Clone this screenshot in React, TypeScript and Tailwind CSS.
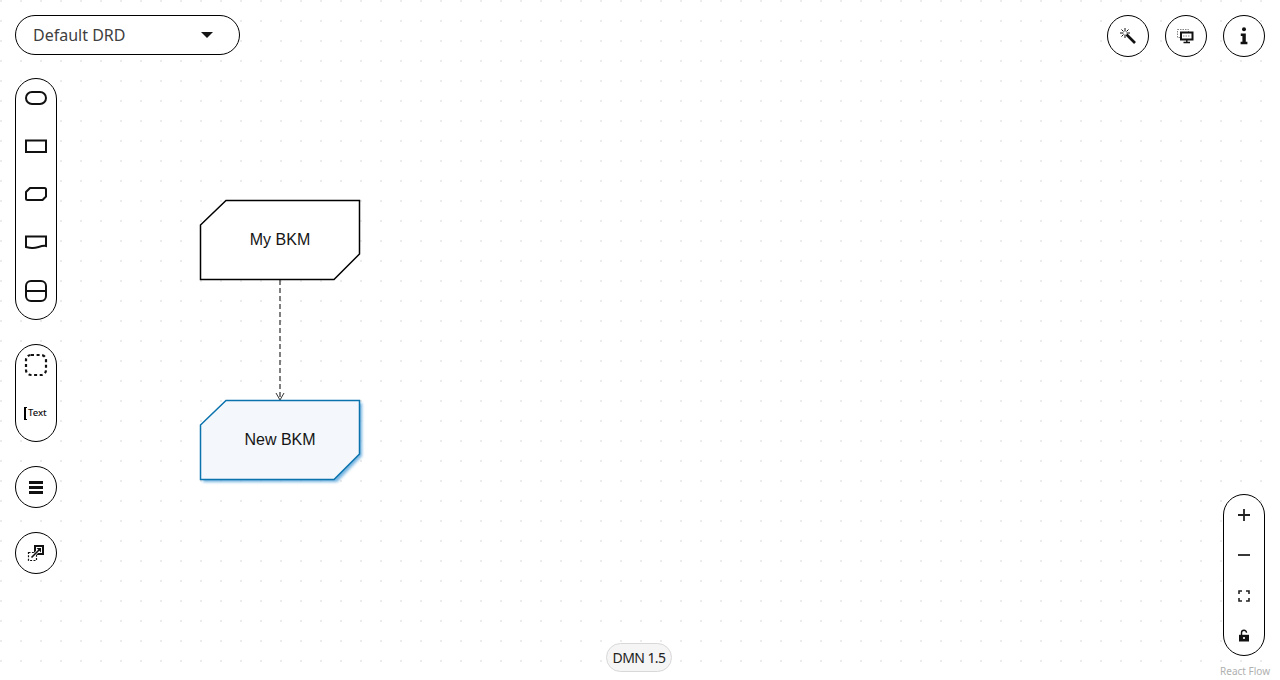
import { useState } from "react";

const iconBtn =
  "w-[42px] h-[42px] rounded-full border border-black bg-white flex items-center justify-center";

const BkmNode = ({ label, selected, className }: { label: string; selected?: boolean; className: string }) => (
  <div className={`absolute w-[160px] h-[80px] flex items-center justify-center ${className}`}>
    <svg width="166" height="86" viewBox="0 0 166 86" className="absolute left-0 top-0 overflow-visible">
      {selected && (
        <path
          d="M3 27 L28 3 L162 3 L162 56 L137 82 L3 82 Z"
          fill="#74b3e0"
          className="blur-[1.5px]"
        />
      )}
      <path
        d="M0.5 25 L26 0.5 L159.5 0.5 L159.5 54 L134 79.5 L0.5 79.5 Z"
        fill={selected ? "#f4f8fc" : "#ffffff"}
        stroke={selected ? "#0a72ad" : "#000000"}
        strokeWidth="1.5"
      />
    </svg>
    <span className="relative font-['Liberation_Sans',sans-serif] text-base text-[#151515]">{label}</span>
  </div>
);

const Palette = () => (
  <div className="w-[42px] h-[242px] rounded-full border border-black bg-white flex flex-col items-center gap-[28px] pt-[9px]">
    <svg width="24" height="20" viewBox="0 0 24 20" fill="none" stroke="#111" strokeWidth="2">
      <rect x="2" y="4" width="20" height="12" rx="6" />
    </svg>
    <svg width="24" height="20" viewBox="0 0 24 20" fill="none" stroke="#111" strokeWidth="2">
      <rect x="2" y="4.5" width="20" height="11.5" />
    </svg>
    <svg width="24" height="20" viewBox="0 0 24 20" fill="none" stroke="#111" strokeWidth="2">
      <path d="M6 4 H20.5 Q22 4 22 5.5 V12.5 L18.5 16 H3.5 Q2 16 2 14.5 V8 Z" strokeLinejoin="round" />
    </svg>
    <svg width="24" height="20" viewBox="0 0 24 20" fill="none" stroke="#111" strokeWidth="2">
      <path d="M2 4.5 H22 V14 C17 13 13 16.5 8 16 C6 16 4 15.5 2 15 Z" />
    </svg>
    <svg width="24" height="22" viewBox="0 0 24 22" fill="none" stroke="#111" strokeWidth="2">
      <rect x="2" y="1" width="20" height="20" rx="5" />
      <path d="M2 11 H22" />
    </svg>
  </div>
);

const Annotations = () => (
  <div className="w-[42px] h-[98px] rounded-full border border-black bg-white flex flex-col items-center pt-[8px] gap-[28px]">
    <svg width="24" height="24" viewBox="0 0 24 24" fill="none" stroke="#111" strokeWidth="2.2" strokeDasharray="3 2.6">
      <rect x="2" y="2" width="20" height="20" rx="5" />
    </svg>
    <div className="w-[24px] h-[16px] flex items-center gap-[1px]">
      <span className="w-[3px] h-[13px] border-l-2 border-y border-black" />
      <span className="font-['Noto_Sans',sans-serif] font-medium text-[9.5px] leading-none text-[#111]">Text</span>
    </div>
  </div>
);

export default function App() {
  const [diagram] = useState("Default DRD");
  return (
    <div className="relative w-[1280px] h-[680px] overflow-hidden bg-white bg-[radial-gradient(circle_at_1px_1px,#ececec_1px,transparent_1.5px)] bg-[size:20px_20px] font-['Noto_Sans',sans-serif]">
      {/* canvas */}
      <svg width="20" height="122" viewBox="0 0 20 122" fill="none" className="absolute left-[270px] top-[279px]">
        <path d="M10 1 V120" stroke="#555" strokeWidth="1.5" strokeDasharray="5 3" />
        <path d="M6 114 L10 121 L14 114" stroke="#333" strokeWidth="1" />
      </svg>
      <BkmNode label="My BKM" className="left-[200px] top-[200px]" />
      <BkmNode label="New BKM" selected className="left-[200px] top-[400px]" />

      {/* panels */}
      <div className="absolute inset-0 flex justify-between pl-[15px] pr-[15px] pt-[15px] pointer-events-none">
        <div className="flex flex-col items-start">
          <div className="w-[225px] h-[40px] rounded-full border border-black bg-white flex items-center justify-between pl-[17px] pr-[26px] text-base text-[#404040]">
            <span>{diagram}</span>
            <span className="w-0 h-0 border-x-[6px] border-x-transparent border-t-[6px] border-t-[#151515]" />
          </div>
          <div className="mt-[23px] flex flex-col gap-[24px]">
            <Palette />
            <Annotations />
            <div className={iconBtn}>
              <div className="flex flex-col gap-[2px]">
                <span className="block w-[14px] h-[3px] bg-[#111]" />
                <span className="block w-[14px] h-[3px] bg-[#111]" />
                <span className="block w-[14px] h-[3px] bg-[#111]" />
              </div>
            </div>
            <div className={iconBtn}>
              <svg width="18" height="18" viewBox="0 0 18 18" fill="none">
                <rect x="1.5" y="8.5" width="8" height="8" stroke="#111" strokeWidth="1.2" strokeDasharray="2 1.4" />
                <path d="M7 1 H17 V11 H7 Z" fill="#111" />
                <rect x="9" y="3" width="6" height="6" fill="#fff" />
                <path d="M4 14 L12 6" stroke="#fff" strokeWidth="3" />
                <path d="M4.5 13.5 L12 6" stroke="#111" strokeWidth="1.6" />
                <path d="M9.5 4 H14 V8.5 Z" fill="#111" />
              </svg>
            </div>
          </div>
        </div>

        <div className="flex flex-col items-end justify-between">
          <div className="flex gap-[16px]">
            <div className={iconBtn}>
              <svg width="18" height="18" viewBox="0 0 18 18" fill="none" stroke="#111">
                <path d="M7.5 7.5 L16 16" strokeWidth="2.6" />
                <path d="M6 1 V4.5 M6 7.5 V11 M1 6 H4.5 M7.5 6 H11 M2.5 2.5 L4.5 4.5 M9.5 2.5 L7.5 4.5 M2.5 9.5 L4.5 7.5" strokeWidth="1" />
              </svg>
            </div>
            <div className={iconBtn}>
              <svg width="18" height="16" viewBox="0 0 18 16" fill="none">
                <rect x="0.5" y="1.5" width="11" height="8" stroke="#777" strokeWidth="0.9" strokeDasharray="1.5 1" />
                <rect x="4" y="4.5" width="11.5" height="7" fill="#fff" stroke="#111" strokeWidth="2" />
                <path d="M6 8 H13.5" stroke="#888" strokeWidth="1" strokeDasharray="1.5 1" />
                <path d="M9.8 12 V14 M6.5 14.5 H13" stroke="#111" strokeWidth="1.4" />
              </svg>
            </div>
            <div className={iconBtn}>
              <svg width="8" height="18" viewBox="0 0 8 18" fill="#111">
                <circle cx="4" cy="2.3" r="2" />
                <path d="M0.8 6.5 H5.8 V14.8 H7.4 V17.2 H0.6 V14.8 H2.4 V9 H0.8 Z" />
              </svg>
            </div>
          </div>

          <div className="flex flex-col items-end">
            <div className="w-[42px] h-[162px] rounded-full border border-black bg-white flex flex-col items-center justify-between pt-[12px] pb-[11px]">
              <svg width="16" height="16" viewBox="0 0 16 16" stroke="#222" strokeWidth="1.8">
                <path d="M8 2 V14 M2 8 H14" />
              </svg>
              <svg width="16" height="16" viewBox="0 0 16 16" stroke="#222" strokeWidth="1.8">
                <path d="M2 8 H14" />
              </svg>
              <svg width="16" height="16" viewBox="0 0 16 16" fill="none" stroke="#222" strokeWidth="1.6">
                <path d="M3 6 V3 H6 M10 3 H13 V6 M13 10 V13 H10 M6 13 H3 V10" />
              </svg>
              <svg width="16" height="16" viewBox="0 0 16 16">
                <path d="M5.5 7 V4.8 A2.5 2.5 0 0 1 10.5 4.8" fill="none" stroke="#111" strokeWidth="1.4" />
                <path d="M3 6.8 H13 V13.5 H3 Z" fill="#111" />
                <circle cx="8" cy="10" r="1.1" fill="#fff" />
              </svg>
            </div>
            <span className="mt-[9px] mb-[2px] mr-[-5px] font-['Noto_Sans',sans-serif] text-[10px] leading-[13px] text-[#b0b0b0]">
              React Flow
            </span>
          </div>
        </div>
      </div>

      <div className="absolute left-[606px] bottom-[8px] w-[66px] h-[29px] rounded-full border border-[#d8d8d8] bg-[#f5f5f5] flex items-center justify-center text-sm tracking-[-0.6px] text-[#222]">
        DMN 1.5
      </div>
    </div>
  );
}
